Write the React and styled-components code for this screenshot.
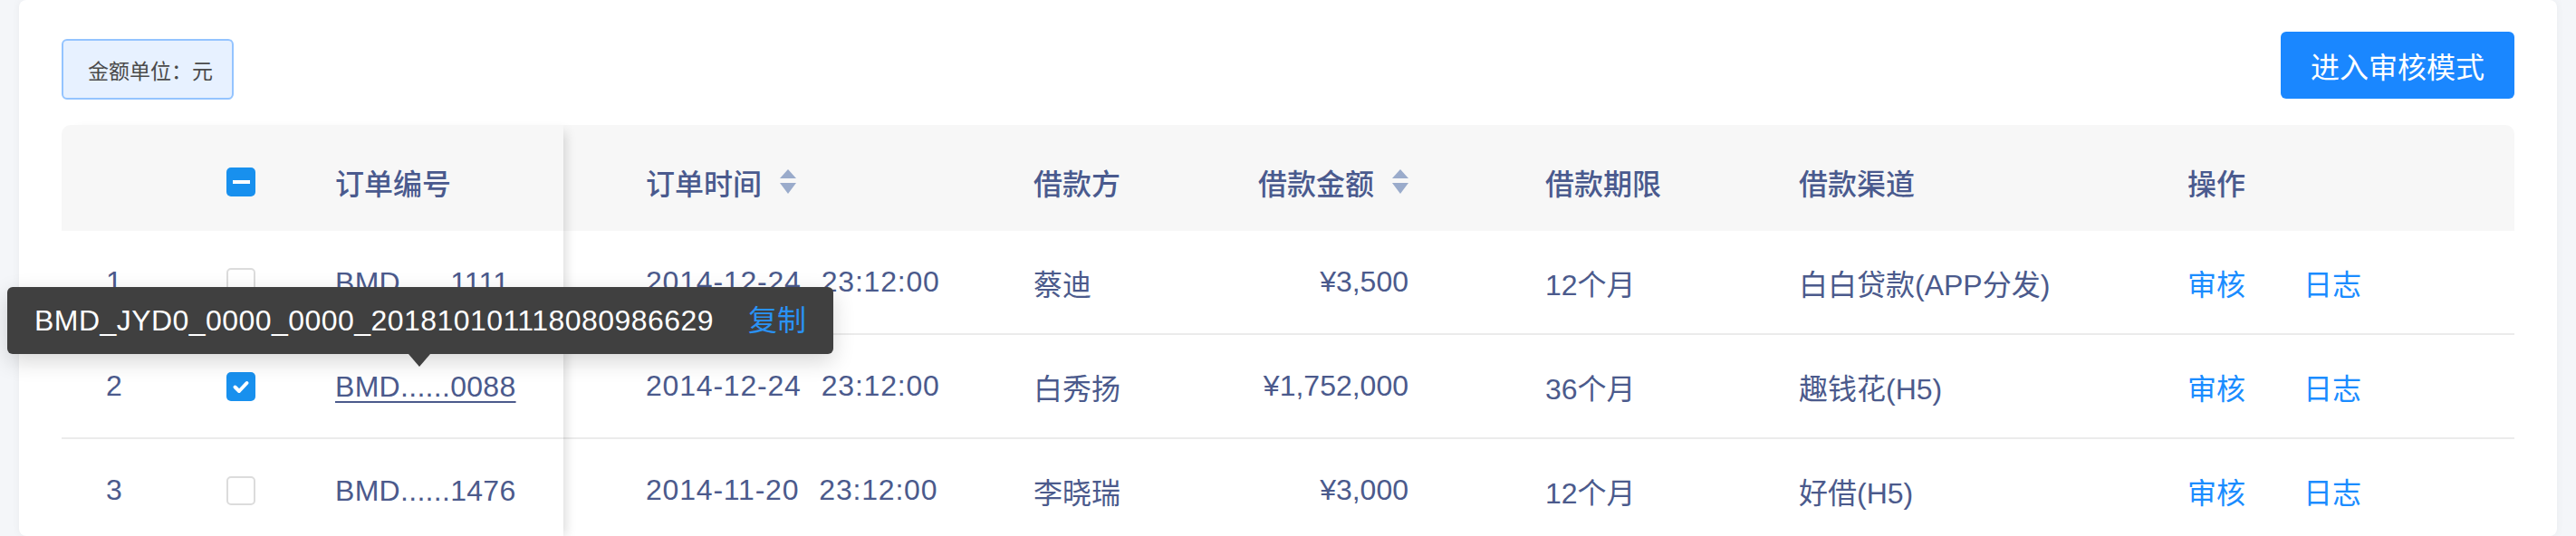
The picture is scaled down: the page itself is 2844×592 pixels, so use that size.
import React from 'react';
import styled, { createGlobalStyle } from 'styled-components';

const Global = createGlobalStyle`
  html, body { margin: 0; padding: 0; overflow: hidden; background: #f4f6f9; }
  body { font-family: "Liberation Sans", "Noto Sans CJK SC", sans-serif; }
  * { box-sizing: border-box; }
`;

const Page = styled.div`
  padding: 0 21px;
`;

const Card = styled.div`
  background: #fff;
  border-radius: 8px;
  box-shadow: 0 0 10px rgba(0, 0, 0, 0.05);
  padding: 35px 47px 0;
  height: 592px;
  overflow: visible;
`;

const Toolbar = styled.div`
  display: flex;
  justify-content: space-between;
  align-items: flex-start;
  margin-bottom: 28px;
`;

const UnitTag = styled.div`
  margin-top: 8px;
  height: 67px;
  border: 2px solid #94c4ff;
  background: #e7f1ff;
  border-radius: 6px;
  display: flex;
  align-items: center;
  padding: 0 21px 0 27px;
  font-size: 23px;
  color: #4a4a4a;
`;

const PrimaryButton = styled.button`
  height: 74px;
  padding: 0 33px;
  border: none;
  border-radius: 6px;
  background: #1a87ff;
  color: #fff;
  font-size: 32px;
  font-family: inherit;
`;

const Table = styled.div`
  display: flex;
`;

const FixedPane = styled.div`
  width: 554px;
  flex: none;
  position: relative;
  z-index: 1;
  background: #fff;
  box-shadow: 10px 0 12px -8px rgba(0, 0, 0, 0.16);
`;

const ScrollPane = styled.div`
  flex: 1;
`;

const HeadRow = styled.div`
  display: flex;
  align-items: center;
  height: 117px;
  padding-top: 8px;
  background: #f7f7f7;
  border-radius: ${(p) => (p.$side === 'left' ? '10px 0 0 0' : '0 10px 0 0')};
  color: #4a5a8e;
  font-weight: 500;
  font-size: 32px;
`;

const BodyRow = styled.div`
  display: flex;
  align-items: center;
  height: 115px;
  border-bottom: 2px solid #ebebeb;
  color: #4b5a8c;
  font-size: 32px;
`;

const Cell = styled.div`
  width: ${(p) => p.$w}px;
  flex: none;
  padding-left: ${(p) => p.$pl || 0}px;
  padding-right: ${(p) => p.$pr || 0}px;
  display: flex;
  align-items: center;
  justify-content: ${(p) => (p.$right ? 'flex-end' : 'flex-start')};
  white-space: nowrap;
`;

const Box = styled.span`
  width: 32px;
  height: 32px;
  border-radius: 5px;
  display: inline-flex;
  align-items: center;
  justify-content: center;
  background: ${(p) => (p.$state === 'off' ? '#fff' : '#1890ee')};
  border: ${(p) => (p.$state === 'off' ? '2px solid #dcdcdc' : 'none')};
`;

const Bar = styled.span`
  width: 19px;
  height: 4px;
  background: #fff;
`;

const Checkbox = ({ state }) => (
  <Box $state={state}>
    {state === 'some' && <Bar />}
    {state === 'on' && (
      <svg width="32" height="32" viewBox="0 0 32 32">
        <path d="M9.5 16.5 L14 21 L22.5 12" fill="none" stroke="#fff" strokeWidth="4" strokeLinecap="round" strokeLinejoin="round" />
      </svg>
    )}
  </Box>
);

const SortIcon = styled.svg`
  margin-left: 20px;
  flex: none;
`;

const Sort = () => (
  <SortIcon width="18" height="27" viewBox="0 0 18 27">
    <path d="M9 0 L18 10 L0 10 Z" fill="#9aabcb" />
    <path d="M0 15 L18 15 L9 27 Z" fill="#9aabcb" />
  </SortIcon>
);

const OrderLink = styled.span`
  position: relative;
  display: inline-block;
  line-height: 40px;
  letter-spacing: 0.3px;
`;

const OrderText = styled.span`
  text-decoration: ${(p) => (p.$hover ? 'underline' : 'none')};
  text-underline-offset: 5px;
  text-decoration-thickness: 2px;
`;

const Tooltip = styled.div`
  position: absolute;
  left: -362px;
  bottom: calc(100% + 16px);
  height: 74px;
  padding: 0 30px;
  background: #404040;
  border-radius: 6px;
  color: #fff;
  display: flex;
  align-items: center;
  gap: 38px;
  font-size: 32px;
  letter-spacing: 0.45px;
  white-space: nowrap;
  box-shadow: 0 8px 24px rgba(0, 0, 0, 0.16);
  &::after {
    content: '';
    position: absolute;
    top: 100%;
    left: 443px;
    border-left: 12px solid transparent;
    border-right: 12px solid transparent;
    border-top: 14px solid #404040;
  }
`;

const CopyLink = styled.span`
  color: #2a92f5;
  letter-spacing: 0;
`;

const Time = styled.span`
  display: inline-flex;
  gap: 22px;
  letter-spacing: 0.8px;
`;

const Actions = styled.span`
  display: inline-flex;
  gap: 64px;
  color: #1a8cff;
`;

const fixedCols = [
  { key: 'idx', w: 182, pl: 49 },
  { key: 'chk', w: 120 },
  { key: 'no', w: 252 },
];

const rows = [
  { idx: 1, checked: false, no: 'BMD......1111', date: '2014-12-24', time: '23:12:00', name: '蔡迪', amount: '¥3,500', term: '12个月', channel: '白白贷款(APP分发)' },
  { idx: 2, checked: true, no: 'BMD......0088', date: '2014-12-24', time: '23:12:00', name: '白秀扬', amount: '¥1,752,000', term: '36个月', channel: '趣钱花(H5)', hover: true, full: 'BMD_JYD0_0000_0000_201810101118080986629' },
  { idx: 3, checked: false, no: 'BMD......1476', date: '2014-11-20', time: '23:12:00', name: '李晓瑞', amount: '¥3,000', term: '12个月', channel: '好借(H5)' },
];

export default function App() {
  return (
    <>
      <Global />
      <Page>
        <Card>
          <Toolbar>
            <UnitTag>金额单位：元</UnitTag>
            <PrimaryButton>进入审核模式</PrimaryButton>
          </Toolbar>
          <Table>
            <FixedPane>
              <HeadRow $side="left">
                <Cell $w={fixedCols[0].w} $pl={fixedCols[0].pl} />
                <Cell $w={fixedCols[1].w}>
                  <Checkbox state="some" />
                </Cell>
                <Cell $w={fixedCols[2].w}>订单编号</Cell>
              </HeadRow>
              {rows.map((r) => (
                <BodyRow key={r.idx}>
                  <Cell $w={fixedCols[0].w} $pl={fixedCols[0].pl}>{r.idx}</Cell>
                  <Cell $w={fixedCols[1].w}>
                    <Checkbox state={r.checked ? 'on' : 'off'} />
                  </Cell>
                  <Cell $w={fixedCols[2].w}>
                    <OrderLink>
                      <OrderText $hover={r.hover}>{r.no}</OrderText>
                      {r.full && (
                        <Tooltip>
                          <span>{r.full}</span>
                          <CopyLink>复制</CopyLink>
                        </Tooltip>
                      )}
                    </OrderLink>
                  </Cell>
                </BodyRow>
              ))}
            </FixedPane>
            <ScrollPane>
              <HeadRow $side="right">
                <Cell $w={519} $pl={91}>订单时间<Sort /></Cell>
                <Cell $w={159}>借款方</Cell>
                <Cell $w={406} $pr={151} $right>借款金额<Sort /></Cell>
                <Cell $w={280}>借款期限</Cell>
                <Cell $w={429}>借款渠道</Cell>
                <Cell $w={361}>操作</Cell>
              </HeadRow>
              {rows.map((r) => (
                <BodyRow key={r.idx}>
                  <Cell $w={519} $pl={91}>
                    <Time><span>{r.date}</span><span>{r.time}</span></Time>
                  </Cell>
                  <Cell $w={159}>{r.name}</Cell>
                  <Cell $w={406} $pr={151} $right>{r.amount}</Cell>
                  <Cell $w={280}>{r.term}</Cell>
                  <Cell $w={429}>{r.channel}</Cell>
                  <Cell $w={361}>
                    <Actions><span>审核</span><span>日志</span></Actions>
                  </Cell>
                </BodyRow>
              ))}
            </ScrollPane>
          </Table>
        </Card>
      </Page>
    </>
  );
}
